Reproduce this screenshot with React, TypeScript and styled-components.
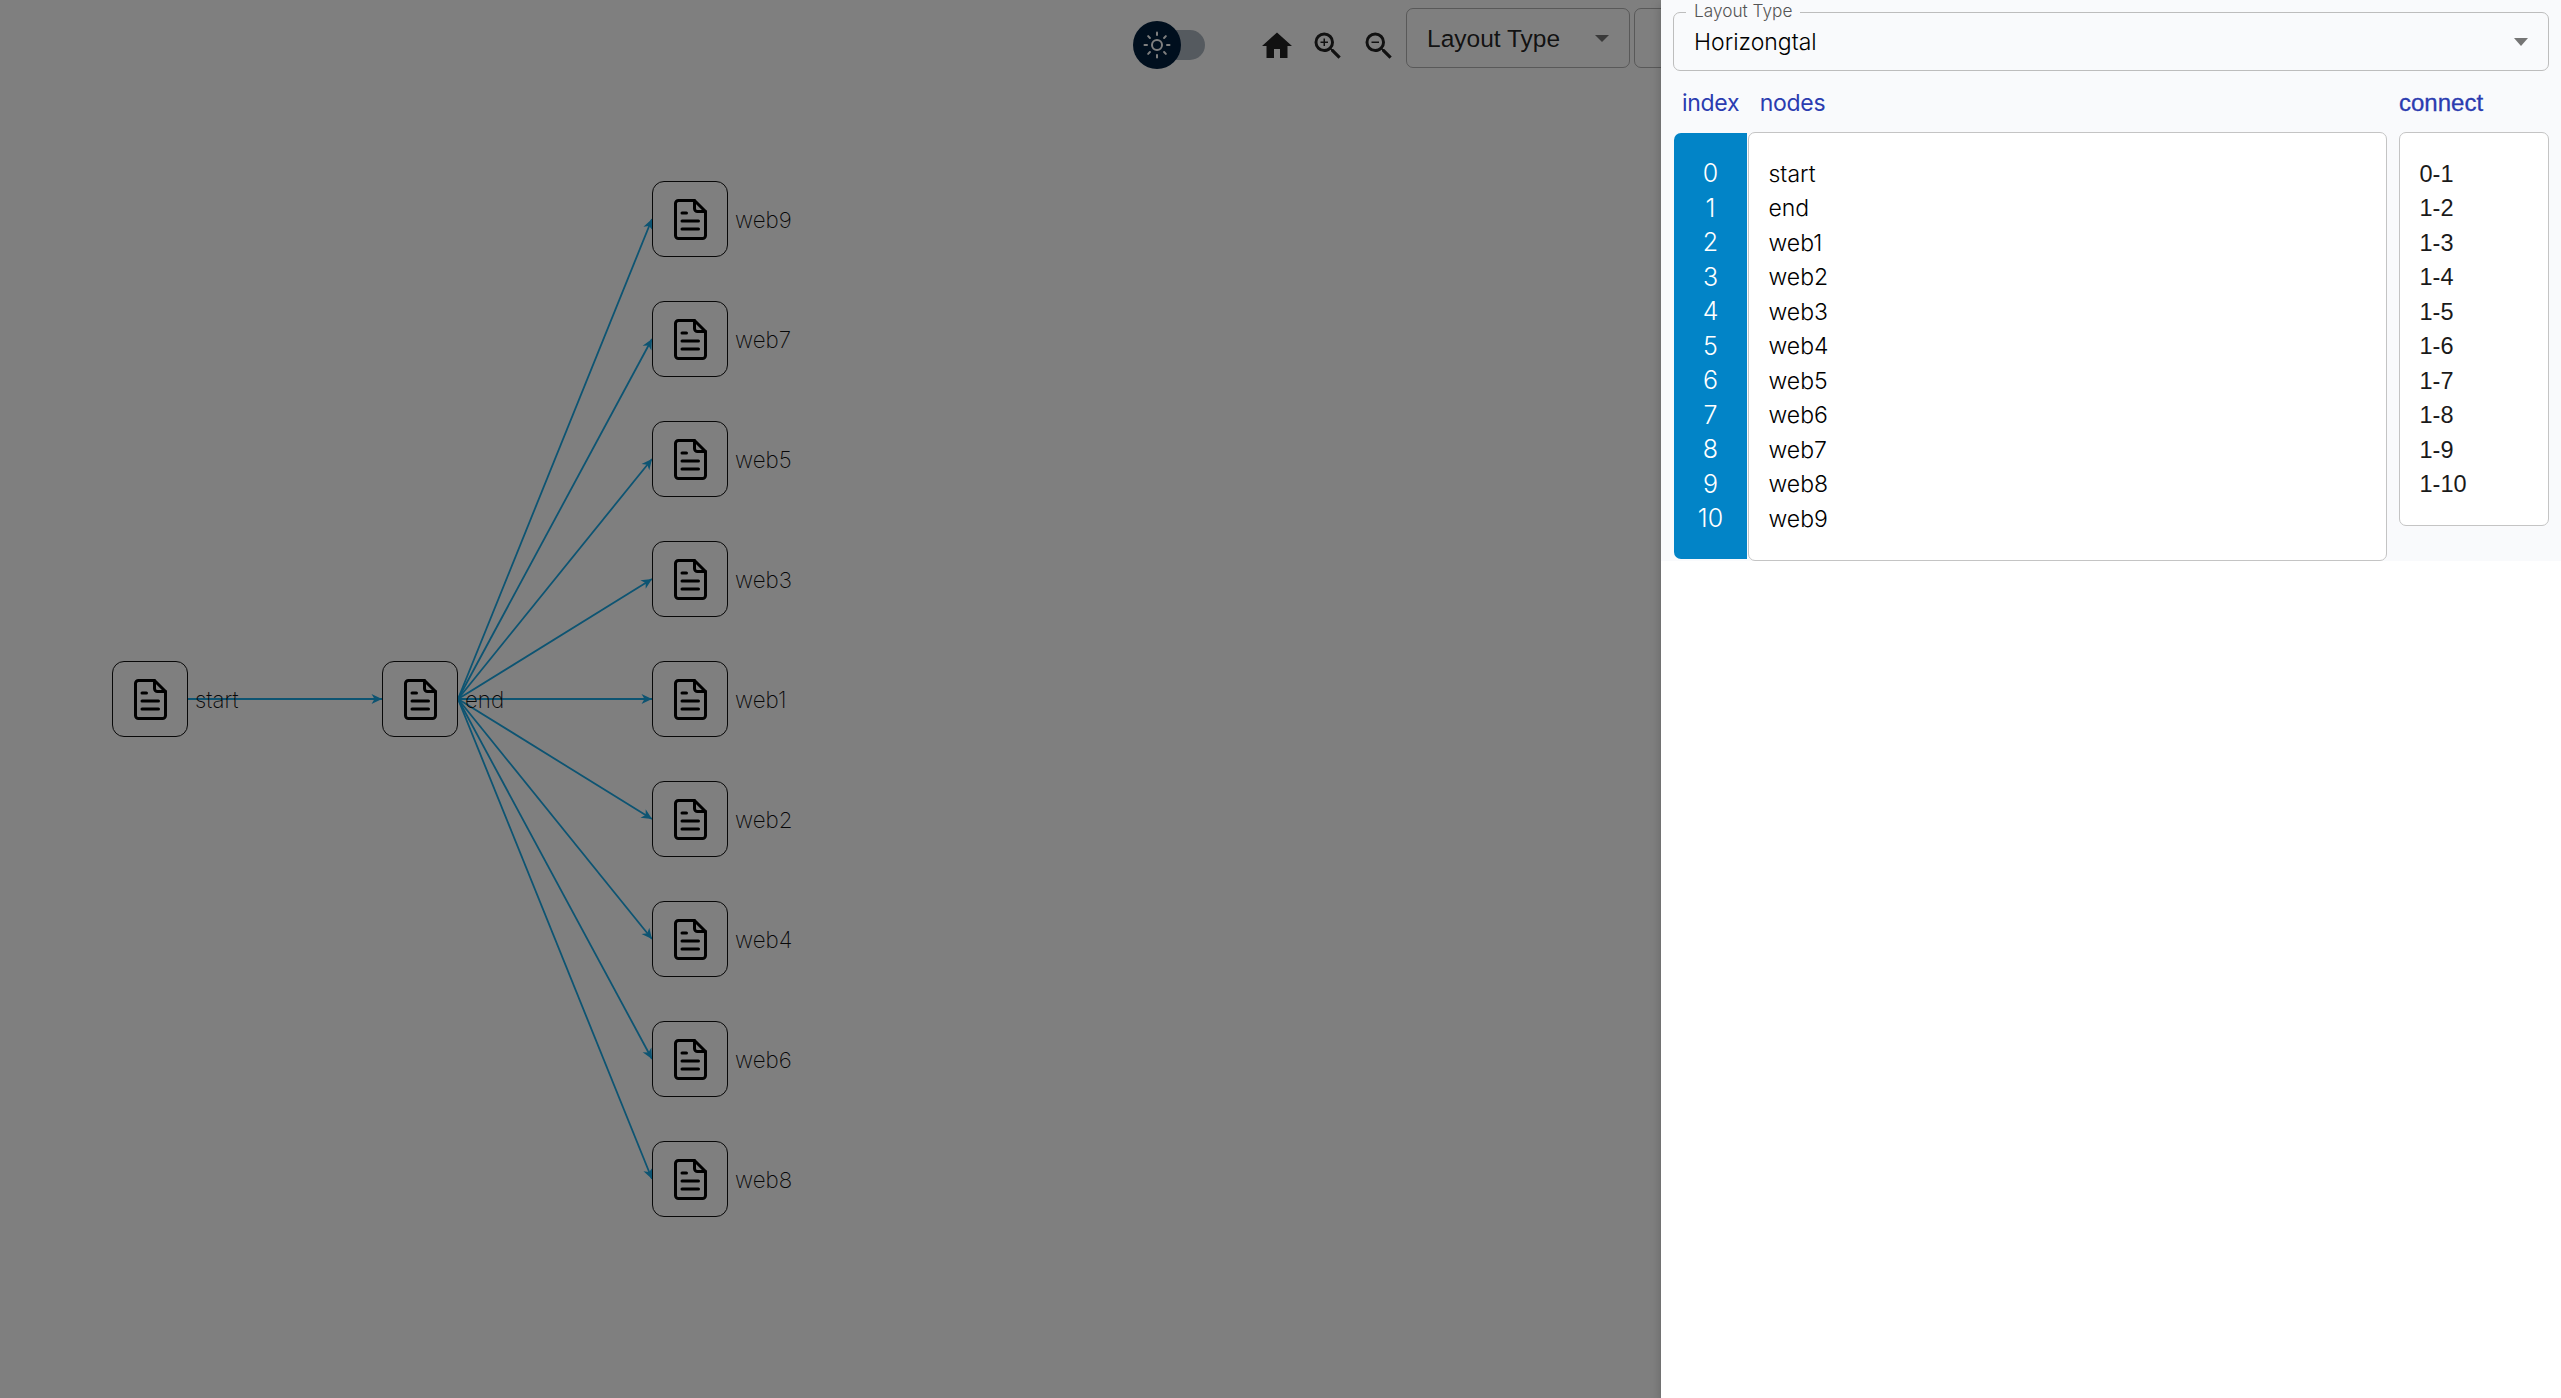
import React from "react";
import styled, { createGlobalStyle } from "styled-components";
import { Sun } from "lucide-react";
import { MdHome, MdZoomIn, MdZoomOut } from "react-icons/md";

const GlobalStyle = createGlobalStyle`
  html, body { margin: 0; padding: 0; height: 100%; overflow: hidden; background: #fff; }
  * { box-sizing: border-box; }
  #root { height: 100%; }
`;

const Page = styled.div`
  position: relative;
  width: 100%;
  height: 100vh;
  overflow: hidden;
  background: #fff;
  font-family: Inter, "Liberation Sans", sans-serif;
`;

const Toolbar = styled.div`
  display: flex;
  align-items: center;
  height: 76px;
  padding-right: 727px;
  justify-content: flex-end;
`;

const ThemeToggle = styled.div`
  position: relative;
  width: 72px;
  height: 30px;
  margin: 14px 54px 0 0;
  border-radius: 15px;
  background: linear-gradient(90deg, transparent 0 12px, #aab4be 12px);
`;

const ToggleKnob = styled.div`
  position: absolute;
  left: 0;
  top: -9px;
  width: 48px;
  height: 48px;
  border-radius: 50%;
  background: #001e3c;
  color: #fff;
  display: flex;
  align-items: center;
  justify-content: center;
`;

const ToolGroup = styled.div`
  display: flex;
  gap: 15px;
  margin: 15px 5px 0 0;
`;

const ToolButton = styled.button`
  width: 36px;
  height: 36px;
  padding: 0;
  border: 0;
  background: none;
  color: #222;
  display: flex;
  cursor: pointer;
`;

const ToolSelect = styled.div<{ $width: number }>`
  width: ${(p) => p.$width}px;
  height: 60px;
  margin-left: 4px;
  padding: 0 20px;
  border: 1.5px solid rgba(0, 0, 0, 0.3);
  border-radius: 7px;
  display: flex;
  align-items: center;
  justify-content: space-between;
  font-family: "Liberation Sans", Arial, sans-serif;
  font-size: 24.5px;
  color: rgba(0, 0, 0, 0.87);
`;

const ToolSelectText = styled.span`
  margin-top: 1px;
`;

const Caret = styled.svg`
  flex: none;
  display: block;
  fill: #757575;
`;

const Canvas = styled.div`
  position: absolute;
  inset: 0;
`;

const Edges = styled.svg`
  position: absolute;
  inset: 0;
  width: 100%;
  height: 100%;
`;

const Node = styled.div<{ $x: number; $y: number }>`
  position: absolute;
  left: ${(p) => p.$x}px;
  top: ${(p) => p.$y}px;
  display: flex;
  align-items: center;
  gap: 7px;
`;

const NodeBox = styled.div`
  width: 76px;
  height: 76px;
  border: 1.6px solid #111;
  border-radius: 12px;
  display: flex;
  align-items: center;
  justify-content: center;
`;

const NodeLabel = styled.span`
  font-family: Inter, sans-serif;
  font-size: 22.3px;
  font-weight: 250;
  color: #111;
  margin-top: 1px;
`;

const Backdrop = styled.div`
  position: absolute;
  inset: 0;
  background: rgba(0, 0, 0, 0.5);
`;

const Drawer = styled.aside`
  position: absolute;
  top: 0;
  right: 0;
  bottom: 0;
  width: 900px;
  background: #fff;
  box-shadow: 0 4px 10px 0 rgba(0, 0, 0, 0.22);
`;

const Panel = styled.div`
  height: 561px;
  padding: 12px 12px 0 12px;
  background: #f9fafc;
`;

const OutlinedSelect = styled.div`
  position: relative;
  height: 59px;
  padding: 0 20px;
  border: 1.5px solid #bdbdbd;
  border-radius: 7px;
  display: flex;
  align-items: center;
  justify-content: space-between;
  font-size: 23px;
  font-weight: 300;
  color: #000;
`;

const FloatingLabel = styled.span`
  position: absolute;
  left: 12px;
  top: -13px;
  padding: 0 8px;
  background: #f9fafc;
  font-size: 17.25px;
  line-height: 21px;
  font-weight: 300;
  color: #555;
`;

const HeaderRow = styled.div`
  display: flex;
  gap: 12px;
  height: 35px;
  margin: 15px 0 11px;
  line-height: 34.5px;
  font-size: 23px;
  font-weight: 400;
  letter-spacing: -0.3px;
  color: #2b3cb0;
`;

const HeaderGroup = styled.div`
  flex: 1;
  display: flex;
  gap: 20.5px;
  padding-left: 9px;
`;

const ConnectHeading = styled.div`
  width: 150px;
  font-family: "Liberation Sans", Arial, sans-serif;
  font-size: 24px;
  letter-spacing: 0;
  -webkit-text-stroke: 0.3px #2b3cb0;
`;

const Columns = styled.div`
  display: flex;
  align-items: flex-start;
  gap: 12px;
`;

const NodesGroup = styled.div`
  flex: 1;
  display: flex;
  align-items: flex-start;
`;

const IndexColumn = styled.div`
  width: 73px;
  height: 426px;
  margin: 1px 1px 0 1px;
  padding-top: 23px;
  border-radius: 7px 0 0 7px;
  background: #0284c7;
  color: #fff;
  font-weight: 300;
  font-size: 25px;
  line-height: 34.5px;
  text-align: center;
`;

const ListBox = styled.div`
  padding: 23.5px 19.5px 23.5px;
  background: #fff;
  border: 1.5px solid #c4c4c4;
  border-radius: 7px;
  font-size: 23px;
  font-weight: 300;
  line-height: 34.5px;
  color: #000;
`;

const NodesBox = styled(ListBox)`
  flex: 1;
  height: 429px;
`;

const ConnectBox = styled(ListBox)`
  width: 150px;
  font-family: "Liberation Sans", Arial, sans-serif;
  font-size: 23.5px;
  font-weight: 400;
  color: #1a1a1a;
`;

const Row = styled.div`
  height: 34.5px;
`;

function DocIcon() {
  return (
    <svg width="33" height="41" viewBox="0 0 33 41" fill="none" stroke="#000" strokeWidth="3" strokeLinecap="round" strokeLinejoin="round">
      <path d="M4.5 1.5H20.5L31.5 12.5V36.5a3 3 0 0 1-3 3H4.5a3 3 0 0 1-3-3V4.5a3 3 0 0 1 3-3z" />
      <path d="M20.5 1.5V9.5a3 3 0 0 0 3 3H31.5" />
      <path d="M8 14H12.5M8 22H24.5M8 30H24.5" />
    </svg>
  );
}

const CENTER = 661;
const PITCH = 120;
const EDGE = "#1aa8e4";
const columnNodes = ["web9", "web7", "web5", "web3", "web1", "web2", "web4", "web6", "web8"];
const nodeNames = ["start", "end", "web1", "web2", "web3", "web4", "web5", "web6", "web7", "web8", "web9"];
const links = ["0-1", "1-2", "1-3", "1-4", "1-5", "1-6", "1-7", "1-8", "1-9", "1-10"];

export default function App() {
  return (
    <Page>
      <GlobalStyle />
      <Toolbar>
        <ThemeToggle>
          <ToggleKnob>
            <Sun size={30} strokeWidth={1.6} />
          </ToggleKnob>
        </ThemeToggle>
        <ToolGroup>
          <ToolButton aria-label="home"><MdHome size={36} /></ToolButton>
          <ToolButton aria-label="zoom in"><MdZoomIn size={36} /></ToolButton>
          <ToolButton aria-label="zoom out"><MdZoomOut size={36} /></ToolButton>
        </ToolGroup>
        <ToolSelect $width={224}>
          <ToolSelectText>Layout Type</ToolSelectText>
          <Caret width="14" height="7" viewBox="0 0 14 7"><path d="M0 0h14L7 7z" /></Caret>
        </ToolSelect>
        <ToolSelect $width={200} />
      </Toolbar>

      <Canvas>
        <Edges>
          <defs>
            <marker id="tip" markerUnits="userSpaceOnUse" markerWidth="14" markerHeight="12" refX="11" refY="6" orient="auto">
              <path d="M0.5 1L11 6L0.5 11L3.5 6z" fill={EDGE} />
            </marker>
          </defs>
          <line x1="188" y1="699" x2="382" y2="699" stroke={EDGE} strokeWidth="1.8" markerEnd="url(#tip)" />
          {columnNodes.map((n, i) => (
            <line key={n} x1="458" y1="699" x2="652" y2={219 + i * PITCH} stroke={EDGE} strokeWidth="1.8" markerEnd="url(#tip)" />
          ))}
        </Edges>
        <Node $x={112} $y={CENTER}>
          <NodeBox><DocIcon /></NodeBox>
          <NodeLabel>start</NodeLabel>
        </Node>
        <Node $x={382} $y={CENTER}>
          <NodeBox><DocIcon /></NodeBox>
          <NodeLabel>end</NodeLabel>
        </Node>
        {columnNodes.map((n, i) => (
          <Node key={n} $x={652} $y={181 + i * PITCH}>
            <NodeBox><DocIcon /></NodeBox>
            <NodeLabel>{n}</NodeLabel>
          </Node>
        ))}
      </Canvas>

      <Backdrop />

      <Drawer>
        <Panel>
          <OutlinedSelect>
            <FloatingLabel>Layout Type</FloatingLabel>
            <span>Horizongtal</span>
            <Caret width="14" height="8" viewBox="0 0 14 8"><path d="M0 0h14L7 8z" /></Caret>
          </OutlinedSelect>
          <HeaderRow>
            <HeaderGroup>
              <span>index</span>
              <span>nodes</span>
            </HeaderGroup>
            <ConnectHeading>connect</ConnectHeading>
          </HeaderRow>
          <Columns>
            <NodesGroup>
              <IndexColumn>
                {nodeNames.map((_, i) => <Row key={i}>{i}</Row>)}
              </IndexColumn>
              <NodesBox>
                {nodeNames.map((n) => <Row key={n}>{n}</Row>)}
              </NodesBox>
            </NodesGroup>
            <ConnectBox>
              {links.map((l) => <Row key={l}>{l}</Row>)}
            </ConnectBox>
          </Columns>
        </Panel>
      </Drawer>
    </Page>
  );
}
